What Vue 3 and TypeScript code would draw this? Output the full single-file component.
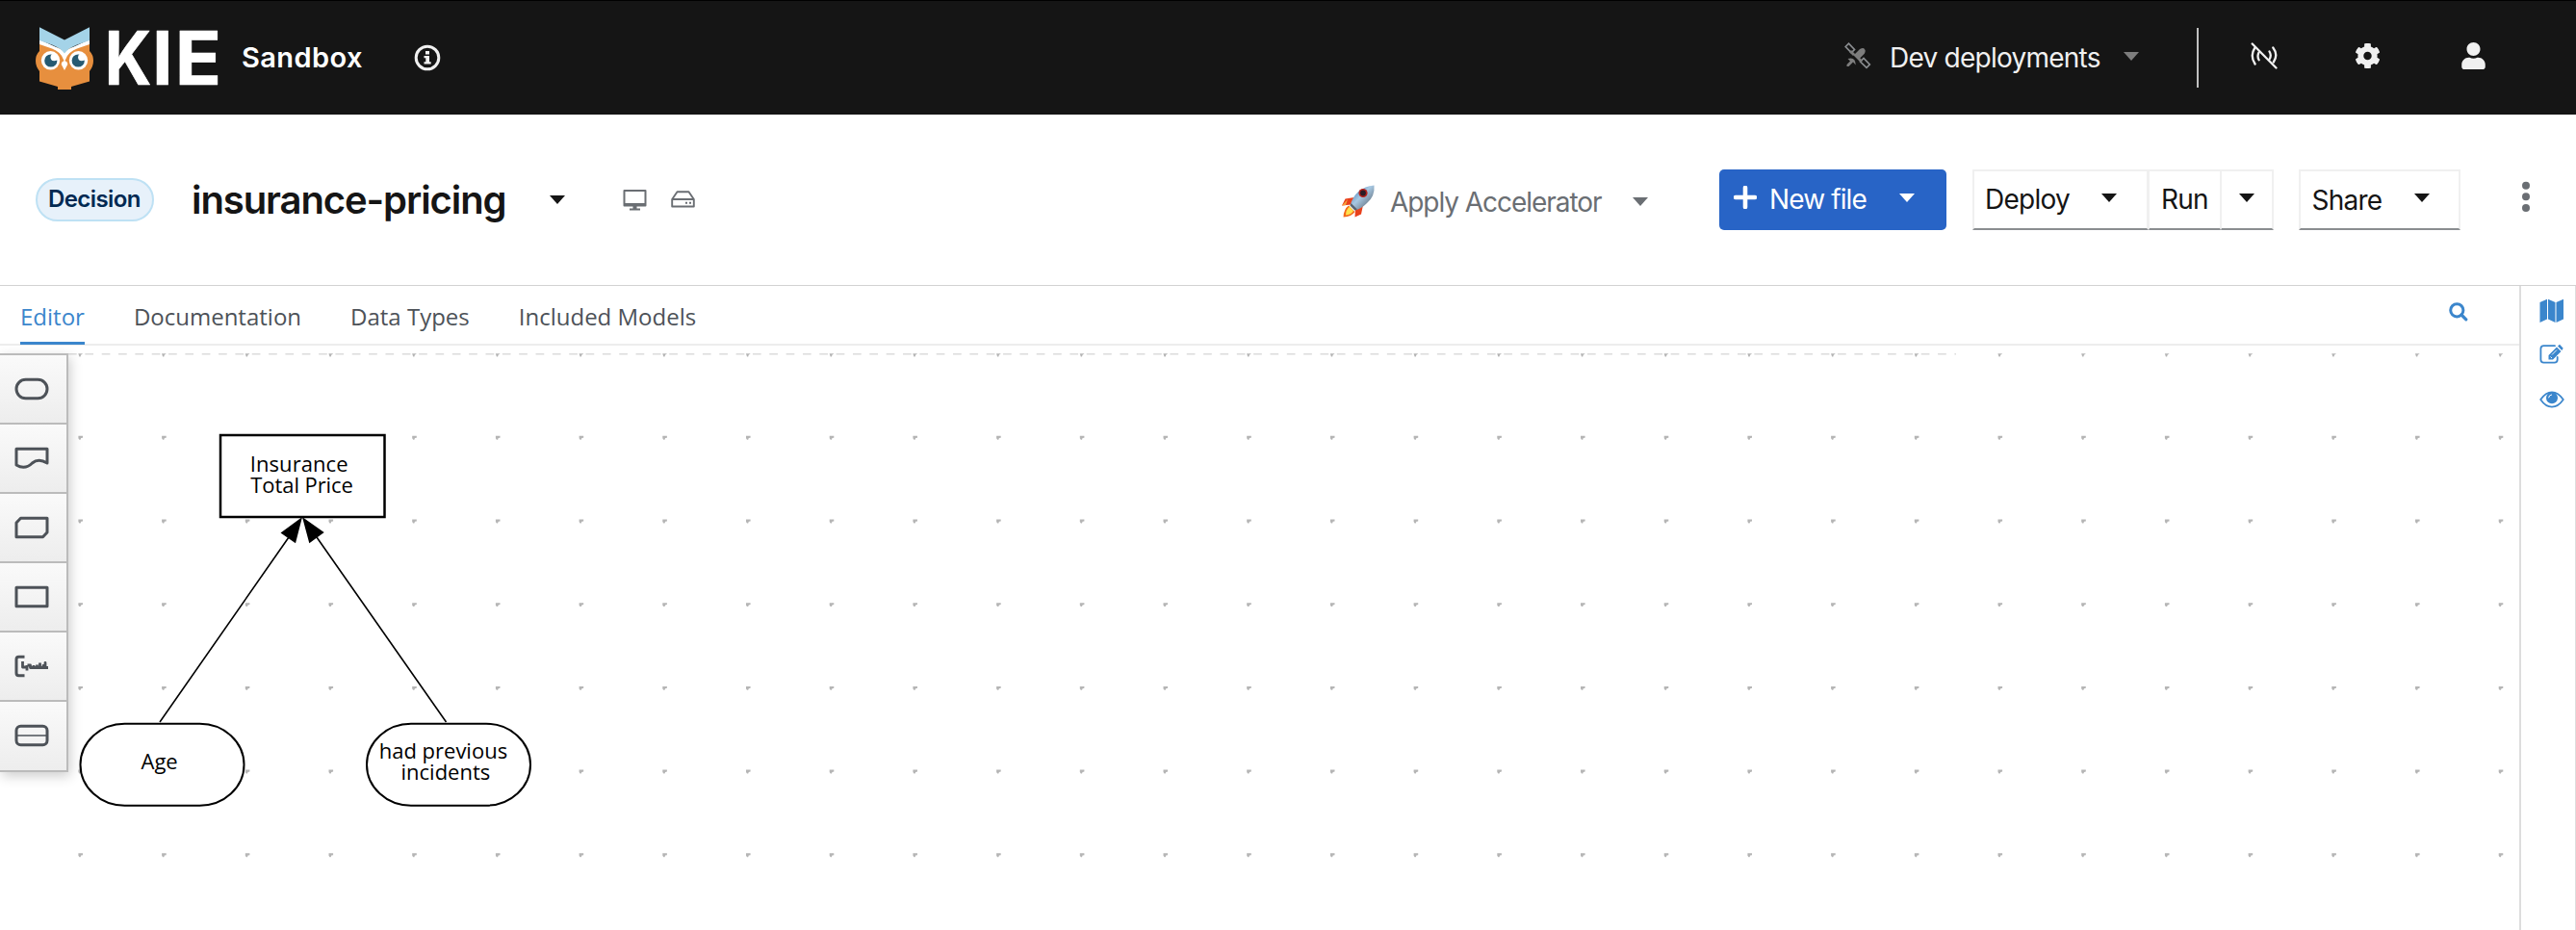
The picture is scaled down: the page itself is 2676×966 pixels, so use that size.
<script setup lang="ts">
const tabs = ['Editor', 'Documentation', 'Data Types', 'Included Models']
const activeTab = 'Editor'

const pitch = 86.7
const dots = Array.from({ length: 7 * 30 }, (_, i) => ({
  x: 83.6 + (i % 30) * pitch,
  y: 367.9 + Math.floor(i / 30) * pitch,
}))

const palette = ['input', 'source', 'bkm', 'decision', 'annotation', 'service']
</script>

<template>
  <div class="app">
    <header class="masthead">
      <svg class="brand" width="196" height="96" viewBox="37 11 196 96">
        <path fill="#e78f3e" d="M41 44.5 L67 50 L93 44.5 V52 Q97 56 97 62 Q97 68 93 73 V83.500 L74 89 V92 H60 V89 L41 83.500 V73 Q37 68 37 62 Q37 56 41 52 Z" />
        <path fill="#fff" d="M41 40 L67 52 L93 40 V45 L80 49.500 Q71 53 68.500 60 L67 63 L65.500 60 Q63 53 54 49.500 L41 45 Z" />
        <path fill="#a4d3e8" d="M41 27.300 L67 40.500 L93 27.300 V41 L80 45.500 Q71 49 67 54.500 Q63 49 54 45.500 L41 41 Z" />
        <circle cx="52.500" cy="61.800" r="9.700" fill="#fff" /><circle cx="81.500" cy="61.800" r="9.700" fill="#fff" />
        <circle cx="52.800" cy="62" r="6.600" fill="#265a72" /><circle cx="81.200" cy="62" r="6.600" fill="#265a72" />
        <circle cx="56.200" cy="58.500" r="3.700" fill="#fff" /><circle cx="84.800" cy="58.500" r="3.700" fill="#fff" />
        <path d="M54 61.500H60V58H54Z M83 61.500H88.500V58H83Z" fill="#fff" />
        <path fill="#fff" d="M67 62 Q70.500 63 70.200 66 L67 72 L63.800 66 Q63.500 63 67 62Z" />
        <g class="kie">
          <text x="108.800" y="87" textLength="48.600" lengthAdjust="spacingAndGlyphs">K</text>
          <text x="158" y="87">I</text>
          <text x="181.700" y="87" textLength="48.400" lengthAdjust="spacingAndGlyphs">E</text>
        </g>
      </svg>
      <span class="product">Sandbox</span>
      <svg class="info" width="28" height="28" viewBox="0 0 28 28">
        <circle cx="14" cy="14" r="11.800" fill="none" stroke="#f0f0f0" stroke-width="3" />
        <path fill="#f0f0f0" d="M12 7h4v3.600h-4zM10.500 12h5.500v6.300h1.700v2.200h-7.200v-2.200h1.800v-4h-1.800z" />
      </svg>
      <div class="spacer"></div>
      <svg class="satellite" width="28" height="28" viewBox="0 0 28 28">
        <g fill="none" stroke="#8a8d90" stroke-width="1.700">
          <path d="M1.200 4.500 L4.500 1.200 L10.500 7.500 L7.200 10.800Z M16.500 20 L20 16.500 L26.300 23 L23 26.300Z" />
        </g>
        <path fill="#7d7d7d" d="M9.500 13.500 L16 7 Q20 4.800 21 7.200 Q22.500 8.500 20.800 11.800 L14.300 18.300Z M3.500 17 Q11.500 14.500 11.800 23.500 L9 20.500 L4.500 25 H2.500 V23 L6 19.500Z M7 8l4 4-2 2-4-4z M15 15l4 4-2 2-4-4z" />
      </svg>
      <span class="dev">Dev deployments</span>
      <i class="caret dim"></i>
      <i class="divider"></i>
      <svg class="unplugged" width="28" height="28" viewBox="0 0 28 28" fill="none" stroke="#f0f0f0" stroke-width="2.300" stroke-linecap="round">
        <path d="M1.700 1.500 L26.500 26.500" />
        <path d="M4.200 6 Q-1 14 4.600 22.500 M8.500 10.500 Q6.500 14.500 8.600 18.300 M19.500 9.500 Q22 13.500 19.600 17.500 M23.300 5.500 Q29 13 23.800 20.500" />
      </svg>
      <svg class="cog" width="27" height="28" viewBox="0 0 512 512">
        <path fill="#f0f0f0" d="M487.400 315.700l-42.600-24.600c4.300-23.200 4.300-47 0-70.200l42.600-24.600c4.900-2.800 7.100-8.600 5.500-14-11.100-35.600-30-67.800-54.700-94.600-3.800-4.100-10-5.100-14.800-2.300L380.800 110c-17.900-15.400-38.500-27.300-60.800-35.100V25.800c0-5.600-3.900-10.500-9.400-11.700-36.700-8.200-74.300-7.800-109.200 0-5.500 1.200-9.400 6.100-9.400 11.700V75c-22.200 7.900-42.800 19.800-60.800 35.100L88.700 85.500c-4.900-2.800-11-1.900-14.800 2.300-24.700 26.700-43.600 58.900-54.700 94.600-1.700 5.400.6 11.200 5.500 14L67.300 221c-4.300 23.200-4.300 47 0 70.200l-42.600 24.600c-4.900 2.800-7.100 8.600-5.500 14 11.100 35.600 30 67.800 54.700 94.600 3.800 4.100 10 5.100 14.800 2.300l42.600-24.600c17.900 15.400 38.500 27.300 60.800 35.100v49.200c0 5.600 3.900 10.500 9.400 11.700 36.700 8.200 74.300 7.800 109.200 0 5.500-1.200 9.400-6.100 9.400-11.700v-49.200c22.200-7.900 42.800-19.800 60.800-35.100l42.600 24.600c4.900 2.800 11 1.900 14.800-2.300 24.700-26.700 43.600-58.900 54.700-94.600 1.500-5.500-.7-11.300-5.600-14.100zM256 336c-44.100 0-80-35.900-80-80s35.900-80 80-80 80 35.900 80 80-35.900 80-80 80z" />
      </svg>
      <svg class="user" width="25" height="28" viewBox="0 0 448 512">
        <path fill="#f0f0f0" d="M224 256c70.700 0 128-57.300 128-128S294.700 0 224 0 96 57.300 96 128s57.300 128 128 128zm89.600 32h-16.700c-22.200 10.200-46.900 16-72.900 16s-50.600-5.800-72.900-16h-16.700C60.200 288 0 348.200 0 422.400V464c0 26.500 21.500 48 48 48h352c26.500 0 48-21.500 48-48v-41.600c0-74.200-60.200-134.400-134.400-134.400z" />
      </svg>
    </header>

    <section class="toolbar">
      <span class="badge">Decision</span>
      <h1 class="title">insurance-pricing</h1>
      <i class="caret title-caret"></i>
      <svg class="desktop" width="25" height="24" viewBox="0 0 25 24">
        <path fill="none" stroke="#6a6e73" stroke-width="2" stroke-linejoin="round" d="M1.500 2H23.500V17.500H1.500Z" />
        <path fill="#6a6e73" d="M1.500 15h22v2.500h-22zM10.500 17h4v3.500h3.500v2h-11v-2h3.500z" />
      </svg>
      <svg class="hdd" width="25" height="18" viewBox="0 0 25 18" fill="none" stroke="#6a6e73" stroke-width="1.900" stroke-linejoin="round">
        <path d="M1.200 9 L6.500 1.200 H18.500 L23.800 9 V16.500 H1.200Z M1.200 9 H23.800" />
        <path d="M15 12.800h2M19 12.800h2" />
      </svg>
      <div class="spacer"></div>
      <svg class="rocket" width="36" height="36" viewBox="0 0 36 36">
        <defs>
          <linearGradient id="hull" x1="0" y1="0" x2="1" y2="1">
            <stop offset="0.150" stop-color="#4d87bd" /><stop offset="0.450" stop-color="#a8c8e2" /><stop offset="0.850" stop-color="#63717f" />
          </linearGradient>
        </defs>
        <path fill="#e8401c" d="M14 14 L4.500 15.500 L1 22.500 L11 21.500Z M15 25.500 L14.500 34.500 L21 31.500 L23 22Z" />
        <path fill="#f6a13a" d="M1 22.500 L7 16 L5 22Z" />
        <path fill="#f26a1b" d="M8 22.500 Q3 26 2.500 34.500 Q11 34 14.500 29Z" />
        <path fill="#ffe14d" d="M9 23.500 Q5 27 5 32.500 Q10.500 32 13 28Z" />
        <path fill="url(#hull)" d="M9.500 22.500 Q15 3.500 34.500 1.500 Q35.500 13 27 20 Q21 26 14.500 27.500Z" />
        <path fill="#59636e" d="M9.500 22.500 L10.500 20 L17 26.500 L14.500 27.500Z" />
        <circle cx="23" cy="9.500" r="4.600" fill="#b3221c" /><circle cx="23" cy="9.500" r="2.900" fill="#2b1d26" />
      </svg>
      <span class="accelerator">Apply Accelerator</span>
      <i class="caret grey"></i>
      <button class="btn primary">
        <svg width="24" height="24" viewBox="0 0 24 24"><path d="M12 2V22M2 12H22" stroke="#fff" stroke-width="4.600" stroke-linecap="round" /></svg>
        <span>New file</span><i class="caret light"></i>
      </button>
      <button class="btn outline deploy"><span>Deploy</span><i class="caret"></i></button>
      <div class="split">
        <button class="btn outline run"><span>Run</span></button>
        <button class="btn outline toggle"><i class="caret"></i></button>
      </div>
      <button class="btn outline share"><span>Share</span><i class="caret"></i></button>
      <svg class="kebab" width="10" height="36" viewBox="0 0 10 36" fill="#6a6e73">
        <circle cx="5" cy="5.700" r="4" /><circle cx="5" cy="17.300" r="4" /><circle cx="5" cy="29" r="4" />
      </svg>
    </section>

    <main class="workspace">
      <div class="editor">
        <nav class="tabs">
          <a v-for="tab in tabs" :key="tab" class="tab" :class="{ active: tab === activeTab }">{{ tab }}</a>
          <svg class="search" width="20" height="20" viewBox="0 0 20 20" fill="none" stroke="#3b86cc">
            <circle cx="8.300" cy="8.300" r="6.600" stroke-width="3" /><path d="M13 13 L17.800 17.800" stroke-width="3.200" stroke-linecap="round" />
          </svg>
        </nav>
        <div class="canvas">
          <svg class="diagram" width="2617" height="607" viewBox="0 359 2617 607">
            <path d="M71 367.700H2032" stroke="#dcdcdc" stroke-width="1.500" stroke-dasharray="8.700 8.640" />
            <path
              v-for="(d, i) in dots" :key="i" fill="#b5b5b5"
              :d="i < 30 ? `M${d.x - 2.3} ${d.y - 0.6}h4.800l-2 1.500l-.5 1.600h-1.200z` : `M${d.x - 2.2} ${d.y - 1.800}h4.600v1.900l-1.800.4l-.6 1.600h-1.200l-1-1.400z`"
            />
            <g stroke="#000" stroke-width="1.600">
              <path d="M166 750 L300 558 M463.500 750 L329 558" />
            </g>
            <path d="M314 537 L291.500 553.500 L307 564.200Z M314 537 L336.700 553 L321.300 564.200Z" />
            <rect x="229" y="452" width="170.500" height="85" fill="#fff" stroke="#000" stroke-width="2.500" />
            <g fill="#fff" stroke="#000" stroke-width="2">
              <rect x="83.500" y="751.700" width="170" height="85" rx="46" ry="42.500" />
              <rect x="381" y="751.700" width="170" height="85" rx="46" ry="42.500" />
            </g>
            <g class="labels">
              <text x="259.700" y="490.300" textLength="101.900">Insurance</text>
              <text x="260.300" y="512.300" textLength="106.600">Total Price</text>
              <text x="146.500" y="799.300">Age</text>
              <text x="393.700" y="788.300">had previous</text>
              <text x="416.500" y="810.300">incidents</text>
            </g>
          </svg>
          <div class="palette">
            <button v-for="kind in palette" :key="kind" class="tool">
              <svg width="36" height="24" viewBox="0 0 36 24" fill="none" stroke="#4d5258" stroke-width="3" stroke-linejoin="round">
                <rect v-if="kind === 'input'" x="2" y="2.300" width="32" height="19.500" rx="9.700" />
                <path v-else-if="kind === 'source'" d="M2 2.300H34V17Q25 11.500 18.500 17Q11 24.500 2 19Z" />
                <path v-else-if="kind === 'bkm'" d="M2 7L6.500 2.300H34V17L29.500 21.800H2Z" />
                <rect v-else-if="kind === 'decision'" x="2" y="2.300" width="32" height="19.500" />
                <template v-else-if="kind === 'annotation'">
                  <path d="M10.500 2.300H4.500Q2 2.300 2 5V19Q2 21.800 4.500 21.800H10.500" />
                  <path stroke-width="2.800" d="M8.500 7V13H13V11 M13 11V16.500 M13.500 11H16.500V13.500H20V11M20 13.500H23.500V10.500M23.500 13.500H26.500V8.500M26.500 13.500H30V11.500H32V8.500V13.500H35" />
                </template>
                <template v-else>
                  <rect x="2" y="2.300" width="32" height="19.500" rx="4.500" /><path d="M3 12H33" stroke-width="1.500" />
                </template>
              </svg>
            </button>
          </div>
        </div>
      </div>
      <aside class="dock">
        <svg width="26" height="26" viewBox="0 0 26 26" fill="#3b86cc">
          <path d="M0.500 4L8 .8V21.500L.5 25ZM9 .8L16.500 4V25L9 21.500ZM17.500 4L25 .8V21.500L17.500 25Z" />
        </svg>
        <svg class="edit" width="26" height="22" viewBox="0 0 26 22">
          <path fill="none" stroke="#3b86cc" stroke-width="1.800" stroke-linecap="round" d="M16 2.200H4.500Q1.400 2.200 1.400 5.300V16.500Q1.400 19.600 4.500 19.600H15.500Q18.700 19.600 18.700 16.500V14" />
          <path fill="#3b86cc" d="M9.500 16.500V12L18 3.500L22.500 8L14 16.500ZM19 2.500L21 .8L24.700 4.800L23.300 6.900Z" />
          <path d="M11.500 13.500L13 15M13 11.500L18 6.500" stroke="#fff" stroke-width=".9" />
        </svg>
        <svg class="eye" width="26" height="18" viewBox="0 0 26 18">
          <path fill="none" stroke="#3b86cc" stroke-width="1.700" d="M1.200 9Q6.500 1.300 13 1.300T24.800 9Q19.500 16.700 13 16.700T1.200 9Z" />
          <circle cx="13" cy="7.300" r="6" fill="#3b86cc" />
          <path fill="none" stroke="#fff" stroke-width="1" d="M9.600 7.300Q9.800 4.300 13 3.900" />
        </svg>
      </aside>
    </main>
  </div>
</template>

<style>
body { margin: 0; background: #fff; }
</style>

<style scoped>
.app { width: 2676px; height: 966px; display: flex; flex-direction: column; overflow: hidden; background: #fff; font-family: Inter, "Liberation Sans", sans-serif; color: #151515; }
svg { display: block; flex: none; }
button { font-family: inherit; color: inherit; padding: 0; margin: 0; background: none; border: 0; }
.spacer { flex: 1; }
.caret { flex: none; width: 0; height: 0; border: 8.500px solid transparent; border-top: 9px solid #151515; border-bottom: 0; }

.masthead { box-sizing: border-box; height: 119px; flex: none; display: flex; align-items: center; background: #151515; border-top: 1px solid #000; padding: 0 94px 0 37px; color: #fff; }
.brand { margin-top: -1px; }
.kie { font: 700 77px Inter, sans-serif; fill: #fff; stroke: #fff; stroke-width: .6px; stroke-linejoin: round; }
.product { margin: -1px 0 0 18px; width: 126px; font-weight: 600; font-size: 29px; letter-spacing: .4px; white-space: nowrap; }
.info { margin: -1px 0 0 53px; }
.satellite { margin: -4px 0 0; }
.dev { width: 218px; margin: -1px 0 0 19px; font-size: 28px; letter-spacing: -.750px; white-space: nowrap; color: #f0f0f0; }
.caret.dim { border-top-color: #7d7d7d; margin: -3px 0 0 25px; }
.divider { width: 2px; height: 62px; background: #c0c0c0; margin: 0 0 0 60px; }
.unplugged { margin: -4px 0 0 54px; }
.cog { margin: -4px 0 0 80px; }
.user { margin: -4px 0 0 84px; }

.toolbar { height: 177px; flex: none; display: flex; align-items: center; padding: 0 47px 0 37px; }
.badge { box-sizing: border-box; width: 123px; height: 45px; border: 2px solid #bee1f4; border-radius: 23px; background: #e7f1fa; color: #002952; font-weight: 600; font-size: 24px; line-height: 40px; letter-spacing: -.6px; padding-left: 11px; white-space: nowrap; }
.title { margin: 0 0 0 39px; width: 330px; font-size: 40px; font-weight: 600; letter-spacing: -1.080px; white-space: nowrap; }
.title-caret { margin-left: 42px; }
.desktop { margin-left: 60px; }
.hdd { margin: -1px 0 0 25px; }
.rocket { margin-top: 3px; }
.accelerator { margin: 5px 0 0 15px; width: 222px; font-size: 28px; letter-spacing: -1.050px; color: #6a6e73; white-space: nowrap; }
.caret.grey { border-top-color: #6a6e73; margin: 4px 0 0 30px; }
.btn { box-sizing: border-box; height: 63px; flex: none; display: flex; align-items: center; font-size: 28px; white-space: nowrap; }
.btn .caret { margin-top: -4px; }
.btn span { margin-top: -2px; letter-spacing: -.75px; }
.primary { width: 236px; margin-left: 74px; background: #2864c6; border-radius: 5px; color: #fff; padding-left: 15px; }
.primary svg { margin-top: -6px; }
.primary span { width: 101px; margin-left: 13px; letter-spacing: -.9px; }
.primary .caret { border-top-color: #fff; margin-left: 34px; }
.outline { border: 2px solid #f0f0f0; border-bottom-color: #8a8d90; }
.deploy { width: 183px; margin-left: 27px; padding-left: 11px; }
.deploy span { width: 88px; }
.deploy .caret { margin-left: 33px; }
.split { display: flex; }
.run { width: 75px; border-left-width: 1px; border-right-width: 1px; padding-left: 12px; }
.toggle { width: 55px; border-left-width: 1px; padding-left: 18px; }
.share { width: 168px; margin-left: 26px; padding-left: 11px; }
.share span { width: 74px; margin-top: 0; }
.share .caret { margin-left: 33px; }
.kebab { margin: -6px 0 0 63px; }

.workspace { box-sizing: border-box; height: 670px; display: flex; border-top: 1px solid #d2d2d2; }
.editor { width: 2617px; flex: none; display: flex; flex-direction: column; }
.tabs { box-sizing: border-box; height: 62px; flex: none; display: flex; align-items: stretch; gap: 51px; padding: 0 53px 0 21px; border-bottom: 2px solid #ededed; font: 24px/64px "Open Sans", "Noto Sans", sans-serif; }
.tab { box-sizing: border-box; height: 61px; color: #4d5258; white-space: nowrap; }
.tab.active { color: #3b86cc; border-bottom: 3px solid #3b86cc; }
.search { margin: 17px 0 0 auto; }
.canvas { position: relative; flex: 1; overflow: hidden; }
.diagram { display: block; }
.labels { font: 22px "Open Sans", "Noto Sans", sans-serif; fill: #000; }
.palette { position: absolute; left: 0; top: 8px; width: 71px; box-sizing: border-box; border-right: 2px solid #bbb; border-bottom: 2px solid #bbb; box-shadow: 2px 4px 12px rgba(3, 3, 3, .2); }
.tool { box-sizing: border-box; width: 69px; height: 72.100px; display: flex; align-items: center; padding: 0 0 1px 15px; border-top: 2px solid #bbb; background: linear-gradient(#fafafa, #ededed); }
.dock { box-sizing: border-box; width: 59px; display: flex; flex-direction: column; align-items: center; border-left: 2px solid #ddd; border-right: 1px solid #ddd; padding: 13px 0 0 7px; }
.edit { margin-top: 21px; }
.eye { margin-top: 27px; }
</style>
